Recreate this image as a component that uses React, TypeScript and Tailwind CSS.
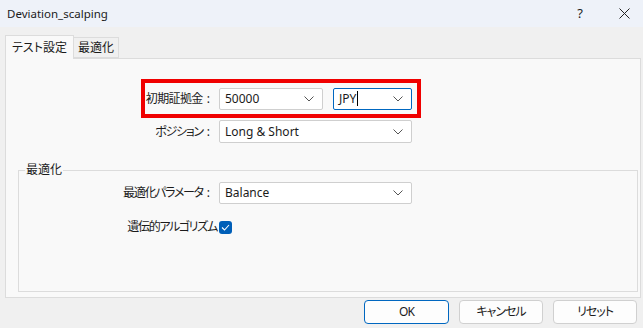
const font = "font-['Segoe_UI','Noto_Sans','Noto_Sans_CJK_JP',sans-serif] [font-feature-settings:'palt']";

function Chevron() {
  return (
    <svg width="10" height="6" viewBox="0 0 10 6" className="shrink-0">
      <path d="M0.5 0.5 L5 5 L9.5 0.5" fill="none" stroke="#555" strokeWidth="1" />
    </svg>
  );
}

function Combo({ value, width, height = 'h-[22px]', focused = false, caret = false }: { value: string; width: string; height?: string; focused?: boolean; caret?: boolean }) {
  return (
    <div
      className={`${width} ${height} flex items-center justify-between bg-white rounded-[2px] border pl-[5px] pr-[8px] ${
        focused ? 'border-[#0067c0]' : 'border-[#cfcfcf]'
      }`}
    >
      <span className="flex items-center">
        {value}
        {caret && <span className="ml-[1px] inline-block w-px h-[15px] bg-black" />}
      </span>
      <Chevron />
    </div>
  );
}

function Label({ text, width, tracking }: { text: string; width: string; tracking: string }) {
  return (
    <div className={`${width} flex justify-end items-center whitespace-nowrap`}>
      <span className={tracking}>{text}</span>
      <span className="ml-[4px]">:</span>
    </div>
  );
}

function Button({ label, primary = false }: { label: string; primary?: boolean }) {
  return (
    <div
      className={`h-[24px] flex items-center justify-center rounded-[4px] bg-[#fdfdfd] border tracking-[-1px] ${
        primary ? 'w-[85px] border-[#0067c0]' : 'w-[84px] border-[#d0d0d0]'
      }`}
    >
      {label}
    </div>
  );
}

export default function App() {
  return (
    <div className={`w-[643px] h-[328px] bg-[#f0f0f0] text-[12px] text-[#1b1b1b] overflow-hidden flex flex-col ${font}`}>
      {/* title bar */}
      <div className="h-[27px] bg-[#eef2f9] flex items-center pl-[7px] shrink-0">
        <span className="text-[11.5px]">Deviation_scalping</span>
        <span className="ml-auto text-[13px] mr-[36px]">?</span>
        <svg width="11" height="11" viewBox="0 0 11 11" className="mr-[13px]">
          <path d="M0.5 0.5 L10.5 10.5 M10.5 0.5 L0.5 10.5" stroke="#222" strokeWidth="1" />
        </svg>
      </div>

      {/* tabs */}
      <div className="mt-[8px] pl-[5px] flex items-end h-[23px] shrink-0">
        <div className="relative z-10 h-[24px] -mb-px px-[6px] flex items-center bg-[#f9f9f9] border border-b-0 border-[#dcdcdc]">
          テスト設定
        </div>
        <div className="h-[21px] px-[4px] flex items-center bg-[#f0f0f0] border border-l-0 border-[#dcdcdc]">
          最適化
        </div>
      </div>

      {/* tab panel */}
      <div className="ml-[5px] w-[636px] h-[240px] shrink-0 bg-[#f9f9f9] border border-[#dcdcdc] flex flex-col">
        <div className="mt-[20px] ml-[135px] w-[280px] h-[39px] border-4 border-[#f00000] flex items-center">
          <Label text="初期証拠金" width="w-[65px]" tracking="tracking-[-0.6px]" />
          <div className="ml-[9px]">
            <Combo value="50000" width="w-[104px]" />
          </div>
          <div className="ml-[10px]">
            <Combo value="JPY" width="w-[79px]" focused caret />
          </div>
        </div>

        <div className="mt-[2px] flex items-center">
          <Label text="ポジション" width="w-[204px]" tracking="tracking-[-1.3px]" />
          <div className="ml-[9px]">
            <Combo value="Long & Short" width="w-[193px]" height="h-[23px]" />
          </div>
        </div>

        <fieldset className="mt-[20px] ml-[12px] w-[620px] h-[129px] border border-[#dcdcdc]">
          <legend className="ml-[6px] px-[1px] leading-[14px]">最適化</legend>
          <div className="mt-[5px] flex items-center">
            <Label text="最適化パラメータ" width="w-[191px]" tracking="tracking-[-1.3px]" />
            <div className="ml-[9px]">
              <Combo value="Balance" width="w-[193px]" />
            </div>
          </div>
          <div className="mt-[16px] flex items-center h-[14px]">
            <div className="w-[198px] flex justify-end whitespace-nowrap tracking-[-1.3px]">遺伝的アルゴリズム</div>
            <div className="ml-[2px] w-[13px] h-[13px] rounded-[3px] bg-[#005fb8] flex items-center justify-center">
              <svg width="9" height="7" viewBox="0 0 9 7">
                <path d="M1 3.5 L3.5 6 L8 1" fill="none" stroke="white" strokeWidth="1.1" />
              </svg>
            </div>
          </div>
        </fieldset>
      </div>

      {/* buttons */}
      <div className="mt-[2px] flex justify-end pr-[6px]">
        <Button label="OK" primary />
        <div className="ml-[10px]">
          <Button label="キャンセル" />
        </div>
        <div className="ml-[10px]">
          <Button label="リセット" />
        </div>
      </div>
    </div>
  );
}
